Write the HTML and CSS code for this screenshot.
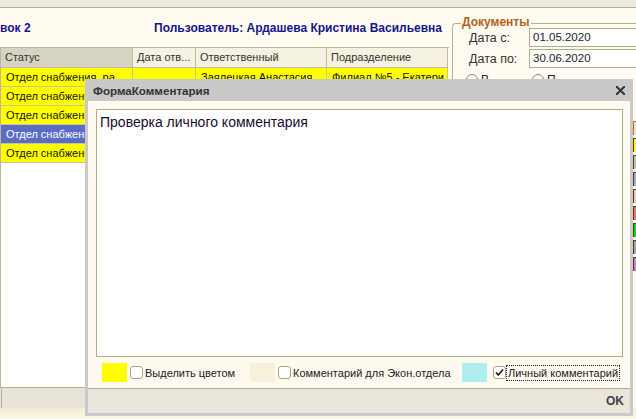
FILE: index.html
```html
<!DOCTYPE html>
<html lang="ru">
<head>
<meta charset="utf-8">
<title>ФормаКомментария</title>
<link rel="stylesheet" href="styles.css">
</head>
<body>
<div class="screen">
  <div class="topstrip"></div>
  <div class="main">
    <div class="leftcol">
      <div class="titles">
        <span>вок 2</span>
        <span>Пользователь: Ардашева Кристина Васильевна</span>
      </div>
      <div class="grid">
        <div class="hrow">
          <div class="hc sorted">Статус</div>
          <div class="hc">Дата отв...</div>
          <div class="hc">Ответственный</div>
          <div class="hc">Подразделение</div>
        </div>
        <div class="row">
          <div class="c">Отдел снабжения, ра</div>
          <div class="c"></div>
          <div class="c">Заялецкая Анастасия</div>
          <div class="c">Филиал №5 - Екатери</div>
        </div>
        <div class="row">
          <div class="c">Отдел снабжения, ра</div>
          <div class="c"></div>
          <div class="c">Заялецкая Анастасия</div>
          <div class="c">Филиал №5 - Екатери</div>
        </div>
        <div class="row">
          <div class="c">Отдел снабжения, ра</div>
          <div class="c"></div>
          <div class="c">Заялецкая Анастасия</div>
          <div class="c">Филиал №5 - Екатери</div>
        </div>
        <div class="row sel">
          <div class="c">Отдел снабжения, ра</div>
          <div class="c"></div>
          <div class="c">Заялецкая Анастасия</div>
          <div class="c">Филиал №5 - Екатери</div>
        </div>
        <div class="row">
          <div class="c">Отдел снабжения, ра</div>
          <div class="c"></div>
          <div class="c">Заялецкая Анастасия</div>
          <div class="c">Филиал №5 - Екатери</div>
        </div>
      </div>
      <div class="gridbar"><span class="gb-cell"></span></div>
    </div>
    <div class="rightcol">
      <div class="grp">
        <div class="grp-head"><span class="grp-label">Документы</span></div>
        <div class="grp-body">
          <div class="frow"><span class="flabel">Дата с:</span><span class="finput">01.05.2020</span></div>
          <div class="frow"><span class="flabel">Дата по:</span><span class="finput">30.06.2020</span></div>
          <div class="rrow">
            <span class="radio on"></span><span class="rlabel">В</span>
            <span class="radio"></span><span class="rlabel">П</span>
          </div>
        </div>
      </div>
      <div class="legend">
        <span class="lg lg1"></span>
        <span class="lg lg2"></span>
        <span class="lg lg3"></span>
        <span class="lg lg4"></span>
        <span class="lg lg5"></span>
        <span class="lg lg6"></span>
        <span class="lg lg7"></span>
        <span class="lg lg8"></span>
        <span class="lg lg9"></span>
      </div>
    </div>
  </div>
  <div class="bottomstrip"></div>

  <div class="dialog">
    <div class="dlg-title">
      <span class="dlg-caption">ФормаКомментария</span>
      <svg class="dlg-close" width="9" height="9" viewBox="0 0 9 9"><path d="M0.5 0.5 L8.5 8.5 M8.5 0.5 L0.5 8.5" stroke="#333" stroke-width="2" stroke-linecap="square"/></svg>
    </div>
    <div class="dlg-body">
      <div class="memo">Проверка личного комментария</div>
      <div class="opts">
        <div class="opt"><span class="sw sw-yellow"></span><span class="cb"></span><span class="olabel">Выделить цветом</span></div>
        <div class="opt"><span class="sw sw-beige"></span><span class="cb"></span><span class="olabel">Комментарий для Экон.отдела</span></div>
        <div class="opt"><span class="sw sw-cyan wide"></span><span class="cb checked"><svg width="11" height="11" viewBox="0 0 11 11"><path d="M2 5.5 L4.3 8 L9 2.5" fill="none" stroke="#222" stroke-width="1.8"/></svg></span><span class="olabel focus">Личный комментарий</span></div>
      </div>
    </div>
    <div class="dlg-foot"><span class="ok">OK</span></div>
  </div>
</div>
</body>
</html>
```

FILE: styles.css
```css
* { box-sizing: border-box; }
html, body { margin: 0; padding: 0; }
body {
  width: 636px;
  height: 419px;
  overflow: hidden;
  font-family: "Liberation Sans", Arial, sans-serif;
  font-size: 11px;
  color: #222;
  background: #fffbf1;
}
.screen {
  position: relative;
  width: 636px;
  height: 419px;
  overflow: hidden;
  display: flex;
  flex-direction: column;
}
.topstrip {
  flex: none;
  height: 8px;
  background: #ebe8df;
  border-bottom: 1px solid #b9ae92;
}
.main {
  flex: none;
  height: 400px;
  display: flex;
  gap: 3px;
}
.leftcol {
  flex: none;
  width: 449px;
  display: flex;
  flex-direction: column;
}
.titles {
  flex: none;
  height: 39px;
  display: flex;
  align-items: center;
  justify-content: space-between;
  padding-right: 7px;
  font-weight: bold;
  font-size: 12px;
  color: #15158c;
}
.grid {
  flex: none;
  height: 340px;
  background: #fff;
  border-top: 1px solid #bdb59a;
  border-left: 1px solid #bdb59a;
  overflow: hidden;
}
.hrow, .row {
  display: grid;
  grid-template-columns: 132px 63px 131px 121px;
}
.hc {
  height: 20px;
  line-height: 19px;
  padding-left: 4px;
  font-size: 11px;
  background: #f6f2e2;
  border-right: 1px solid #c4bc9f;
  border-bottom: 1px solid #c4bc9f;
  color: #333;
  white-space: nowrap;
  overflow: hidden;
}
.hc.sorted { background: #d7d3c3; }
.c {
  height: 19px;
  line-height: 18px;
  padding-left: 5px;
  font-size: 11px;
  background: #ffff00;
  border-right: 1px solid #c9c58e;
  border-bottom: 1px solid #c9c58e;
  color: #111;
  white-space: nowrap;
  overflow: hidden;
}
.row.sel .c { background: #5b6cc6; color: #fff; }
.gridbar {
  flex: none;
  height: 21px;
  background: #e9e4d9;
  border-top: 1px solid #b7ad92;
  display: flex;
}
.gb-cell {
  width: 2px;
  border-right: 1px solid #b7ad92;
}
.bottomstrip {
  flex: none;
  height: 11px;
  background: linear-gradient(#f2ecce, #fbf8ea);
}

/* right column */
.rightcol {
  flex: 1;
  display: flex;
  flex-direction: column;
  min-width: 0;
}
.grp-head {
  display: flex;
  align-items: center;
  height: 8px;
  margin-top: 12px;
}
.grp-head::before {
  content: "";
  flex: none;
  width: 8px;
  height: 4px;
  align-self: flex-end;
  border-top: 1px solid #b8ae90;
  border-left: 1px solid #b8ae90;
  border-top-left-radius: 4px;
}
.grp-head::after {
  content: "";
  flex: 1;
  height: 4px;
  align-self: flex-end;
  border-top: 1px solid #b8ae90;
}
.grp-label {
  font-size: 12px;
  font-weight: bold;
  color: #b0641a;
  line-height: 8px;
  padding: 0 2px 4px 1px;
  white-space: nowrap;
}
.grp-body {
  border-left: 1px solid #b8ae90;
  padding-left: 16px;
}
.frow {
  display: flex;
  align-items: center;
  height: 19px;
  margin-bottom: 2px;
  font-size: 12.5px;
  color: #333;
}
.flabel { width: 60px; flex: none; }
.finput {
  flex: none;
  width: 112px;
  height: 19px;
  line-height: 17px;
  padding-left: 3px;
  font-size: 11.5px;
  background: #fff;
  border: 1px solid #b4aa8c;
  color: #222;
}
.rrow {
  display: flex;
  align-items: center;
  height: 20px;
  margin-left: -3px;
  font-size: 12px;
}
.radio {
  width: 12px;
  height: 12px;
  border-radius: 50%;
  border: 1px solid #8c8470;
  background: #fff;
  margin-right: 3px;
}
.rlabel { width: 51px; }
.legend {
  margin-top: 31px;
  padding-left: 181px;
  display: flex;
  flex-direction: column;
  gap: 3px;
}
.lg {
  width: 14px;
  height: 14px;
  border-left: 1px solid #5a3a10;
  border-top: 1px solid #5a3a10;
}
.lg1 { background: #f7e2c0; border-color: #c86a10; }
.lg2 { background: #ffff00; }
.lg3 { background: #b9c8a9; }
.lg4 { background: #93b2d8; }
.lg5 { background: #f8caa8; }
.lg6 { background: #f07262; }
.lg7 { background: #00e000; }
.lg8 { background: #a2a2a2; }
.lg9 { background: #e072e0; }

/* dialog */
.dialog {
  position: absolute;
  left: 85px;
  top: 79px;
  width: 548px;
  height: 337px;
  background: #c9c9c9;
  padding: 0 3px 3px 3px;
  display: flex;
  flex-direction: column;
}
.dlg-title {
  flex: none;
  height: 22px;
  display: flex;
  align-items: center;
  justify-content: space-between;
  padding: 0 5px 0 5px;
}
.dlg-caption {
  font-weight: bold;
  font-size: 11.6px;
  color: #333;
}
.dlg-close { display: block; }
.dlg-body {
  flex: none;
  height: 288px;
  background: #fefaf0;
  border-bottom: 1px solid #b4aa8c;
  padding: 8px 7px 0 8px;
  display: flex;
  flex-direction: column;
}
.memo {
  flex: none;
  height: 248px;
  background: #fff;
  border: 1px solid #b4aa8c;
  padding: 4px 3px;
  font-size: 14px;
  color: #1b0a33;
}
.opts {
  flex: 1;
  display: grid;
  grid-template-columns: 148px 212px auto;
  align-items: center;
  padding-left: 6px;
}
.opt {
  display: flex;
  align-items: center;
}
.sw {
  flex: none;
  width: 25px;
  height: 19px;
  margin-right: 3px;
}
.sw.wide { margin-right: 6px; }
.sw-yellow { background: #ffff00; }
.sw-beige { background: #f7f0da; }
.sw-cyan { background: #afeeee; }
.cb {
  flex: none;
  width: 13px;
  height: 13px;
  border: 1px solid #a8a287;
  border-radius: 3px;
  background: #fff;
  margin-right: 2px;
  display: flex;
  align-items: center;
  justify-content: center;
}
.cb.checked { margin-right: 0; }
.cb svg { display: block; }
.olabel {
  white-space: nowrap;
  font-size: 11px;
  color: #222;
}
.olabel.focus {
  border: 1px dotted #222;
  padding: 0 1px;
  line-height: 14px;
}
.dlg-foot {
  flex: 1;
  background: #e9e5da;
  display: flex;
  align-items: center;
  justify-content: flex-end;
  padding-right: 6px;
}
.ok {
  font-weight: bold;
  font-size: 12px;
  color: #444;
}
```
